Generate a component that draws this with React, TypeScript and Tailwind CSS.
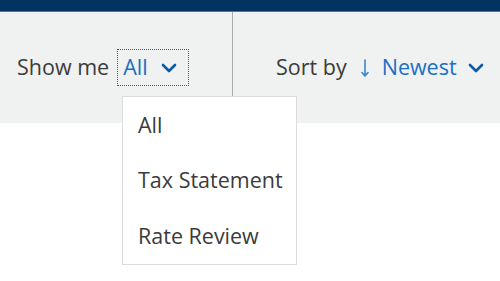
import { useState } from 'react';

const options = ['All', 'Tax Statement', 'Rate Review'];

function Chevron({ className }: { className?: string }) {
  return (
    <svg viewBox="0 0 16 10" className={className} fill="none" stroke="currentColor" strokeWidth="2.6" strokeLinecap="round" strokeLinejoin="round">
      <path d="M2 2l6 6 6-6" />
    </svg>
  );
}

function DownArrow({ className }: { className?: string }) {
  return (
    <svg viewBox="0 0 8 18" className={className} fill="none" stroke="currentColor" strokeWidth="1.6" strokeLinecap="round" strokeLinejoin="round">
      <path d="M4 1v16M1 13.5L4 17l3-3.5" />
    </svg>
  );
}

export default function App() {
  const [filter, setFilter] = useState('All');

  return (
    <div className="w-[500px] h-[281px] bg-white overflow-hidden text-[#3b3b3b]" style={{ fontFamily: '"Open Sans", sans-serif' }}>
      <div className="h-[12px] bg-[#033461] border-b border-[#5b7591]" />
      <div className="h-[111px] bg-[#f0f1f1] flex">
        <div className="w-[232px] flex items-center pl-[17px] relative">
          <span className="text-[21.5px]">Show me</span>
          <button className="ml-[9px] h-[35px] pl-[5px] pr-[11px] flex items-center gap-[13px] outline-1 outline-dotted outline-[#4a5a6a] text-[21.5px] text-[#1a6fc4]">
            <span>{filter}</span>
            <Chevron className="w-[16px] h-[10px] text-[#0b5aa6]" />
          </button>
          <div className="absolute left-[122px] top-[84px] w-[175px] bg-white border border-[#dcdcdc] z-10">
            {options.map((o) => (
              <div key={o} onClick={() => setFilter(o)} className="h-[55.5px] flex items-center pl-[15px] text-[21.5px] cursor-pointer">
                {o}
              </div>
            ))}
          </div>
        </div>
        <div className="w-px bg-[#ababab]" />
        <div className="flex-1 flex items-center pl-[43px]">
          <span className="text-[21.5px]">Sort by</span>
          <DownArrow className="ml-[14px] w-[8px] h-[18px] text-[#3b86d0]" />
          <span className="ml-[13px] text-[21.5px] text-[#1a6fc4]">Newest</span>
          <Chevron className="ml-[11px] w-[16px] h-[10px] text-[#0b5aa6]" />
        </div>
      </div>
    </div>
  );
}
